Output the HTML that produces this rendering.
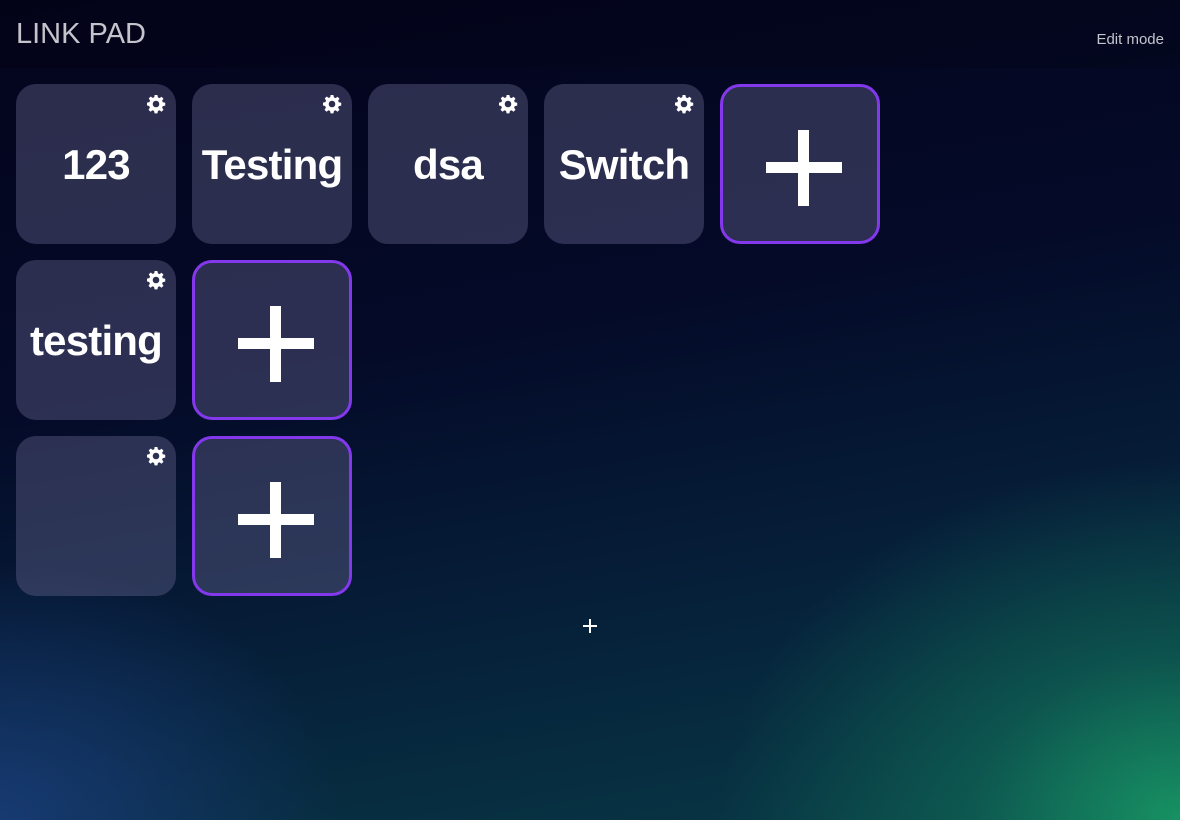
<!DOCTYPE html>
<html><head><style>
*{margin:0;padding:0;box-sizing:border-box}
html,body{width:1180px;height:820px;overflow:hidden}
body{font-family:"Liberation Sans",sans-serif;position:relative;
background:
radial-gradient(ellipse 460px 360px at 1180px 820px, rgba(24,150,100,0.95), rgba(20,130,95,0.45) 45%, rgba(0,0,0,0) 100%),
radial-gradient(ellipse 340px 260px at 0px 820px, rgba(25,60,120,0.9), rgba(0,0,0,0) 100%),
linear-gradient(170deg,#04041c 0%,#040a28 40%,#06203a 70%,#083a46 100%);}
.hdr{position:absolute;left:0;top:0;width:1180px;height:68px;background:rgba(0,0,0,0.12)}
.title{position:absolute;left:16px;top:18px;font-size:29px;color:#c4c4cc}
.edit{position:absolute;right:16px;top:31px;font-size:15px;color:#c4c4cc}
.card{position:absolute;width:160px;height:160px;border-radius:20px;background:rgba(100,100,140,0.42);display:flex;align-items:center;justify-content:center;color:#fff;font-weight:bold;font-size:42px;letter-spacing:-0.8px;padding-top:2px}
.add{border:3px solid #8338ec}
.gear{position:absolute;right:10px;top:10px;width:20px;height:20px}
.plus{position:absolute;left:50%;top:50%;width:76px;height:76px;margin:-34px 0 0 -34px}
.plus:before,.plus:after{content:"";position:absolute;background:#fff}
.plus:before{left:32px;top:0;width:11px;height:76px}
.plus:after{left:0;top:32px;width:76px;height:11px}
</style></head><body>
<div class="hdr"></div>
<div class="title">LINK PAD</div>
<div class="edit">Edit mode</div>

<svg width="0" height="0" style="position:absolute"><defs><g id="g"><path fill="#fff" fill-rule="evenodd" d="M8.6 1h2.8l.5 2.4 1.6.7 2-1.4 2 2-1.4 2 .7 1.6 2.4.5v2.8l-2.4.5-.7 1.6 1.4 2-2 2-2-1.4-1.6.7-.5 2.4H8.6l-.5-2.4-1.6-.7-2 1.4-2-2 1.4-2-.7-1.6L1 11.4V8.6l2.4-.5.7-1.6-1.4-2 2-2 2 1.4 1.6-.7zM10 6.7a3.3 3.3 0 1 0 0 6.6 3.3 3.3 0 1 0 0-6.6z"/></g></defs></svg>

<div class="card" style="left:16px;top:84px">123<svg class="gear" viewBox="0 0 20 20"><use href="#g"/></svg></div>
<div class="card" style="left:192px;top:84px">Testing<svg class="gear" viewBox="0 0 20 20"><use href="#g"/></svg></div>
<div class="card" style="left:368px;top:84px">dsa<svg class="gear" viewBox="0 0 20 20"><use href="#g"/></svg></div>
<div class="card" style="left:544px;top:84px">Switch<svg class="gear" viewBox="0 0 20 20"><use href="#g"/></svg></div>
<div class="card add" style="left:720px;top:84px"><div class="plus"></div></div>

<div class="card" style="left:16px;top:260px">testing<svg class="gear" viewBox="0 0 20 20"><use href="#g"/></svg></div>
<div class="card add" style="left:192px;top:260px"><div class="plus"></div></div>

<div class="card" style="left:16px;top:436px"><svg class="gear" viewBox="0 0 20 20"><use href="#g"/></svg></div>
<div class="card add" style="left:192px;top:436px"><div class="plus"></div></div>

<div style="position:absolute;left:583px;top:625px;width:14px;height:2px;background:#fff"></div>
<div style="position:absolute;left:589px;top:619px;width:2px;height:14px;background:#fff"></div>
</body></html>
